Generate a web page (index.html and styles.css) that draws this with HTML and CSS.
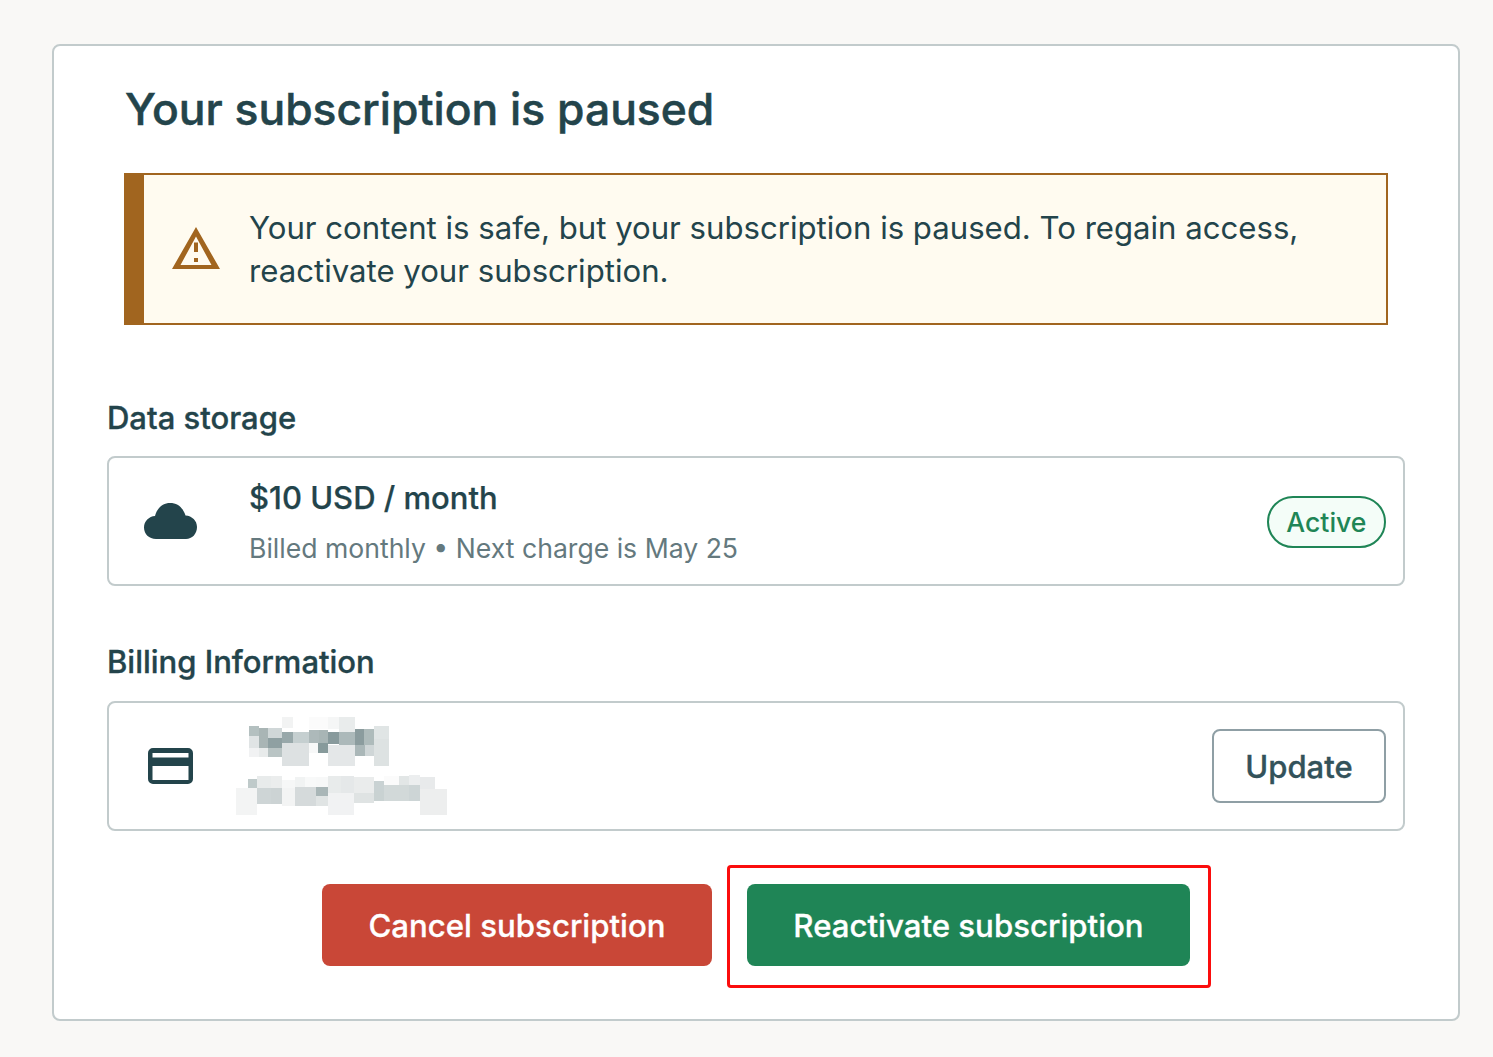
FILE: index.html
```html
<!DOCTYPE html>
<html lang="en">
<head>
<meta charset="utf-8">
<title>Subscription</title>
<link rel="stylesheet" href="styles.css">
</head>
<body>
<main class="card">
  <h1 class="title">Your subscription is paused</h1>
  <div class="alert">
    <svg class="alert-icon" viewBox="0 0 48 44" aria-hidden="true">
      <path fill-rule="evenodd" d="M24 0 48 42H0ZM24 9.500 8.500 38H39.500Z" fill="#a1651f"/>
      <rect x="22" y="15.500" width="4" height="9.500" fill="#a1651f"/>
      <rect x="22" y="31" width="4" height="4" fill="#a1651f"/>
    </svg>
    <p class="alert-text">Your content is safe, but your subscription is paused. To regain access, reactivate your subscription.</p>
  </div>

  <h2 class="label label-storage">Data storage</h2>
  <section class="row">
    <svg class="row-icon cloud" viewBox="0 0 53 36" aria-hidden="true">
      <path fill="#23444b" d="M12 36C5 36 0 31 0 24.500C0 18 5 13.500 11 13C13 5 19 0 26 0C34 0 39 5 41.500 12.500C48 13 53 17.500 53 24C53 31 48 36 42 36Z"/>
    </svg>
    <div class="row-body">
      <div class="plan">$10 USD / month</div>
      <div class="meta">Billed monthly • Next charge is May 25</div>
    </div>
    <span class="badge">Active</span>
  </section>

  <h2 class="label label-billing">Billing Information</h2>
  <section class="row">
    <svg class="row-icon credit" viewBox="0 0 45 36" aria-hidden="true">
      <path fill-rule="evenodd" fill="#23444b" d="M5 0H40A5 5 0 0 1 45 5V31A5 5 0 0 1 40 36H5A5 5 0 0 1 0 31V5A5 5 0 0 1 5 0ZM4.500 5V9.500H40.500V5ZM4.500 18V32H40.500V18Z"/>
    </svg>
    <svg class="mosaic" viewBox="408 69 633 294" aria-hidden="true">
      <rect x="546" y="69" width="33" height="33" fill="#f2f3f3"/>
      <rect x="627" y="69" width="57" height="36" fill="#fbfbfb"/>
      <rect x="684" y="69" width="33" height="36" fill="#f5f6f6"/>
      <rect x="717" y="69" width="48" height="45" fill="#e9ecec"/>
      <rect x="447" y="96" width="30" height="30" fill="#b4c0c0"/>
      <rect x="477" y="102" width="27" height="60" fill="#a9b5b5"/>
      <rect x="504" y="102" width="42" height="30" fill="#d0d7d8"/>
      <rect x="546" y="114" width="33" height="33" fill="#98a8aa"/>
      <rect x="579" y="114" width="48" height="33" fill="#c5cfd0"/>
      <rect x="627" y="108" width="30" height="39" fill="#adb9ba"/>
      <rect x="657" y="108" width="27" height="39" fill="#a8b5b5"/>
      <rect x="684" y="114" width="33" height="36" fill="#889a9c"/>
      <rect x="717" y="114" width="48" height="39" fill="#acb9ba"/>
      <rect x="765" y="105" width="27" height="48" fill="#8b9c9e"/>
      <rect x="792" y="105" width="30" height="48" fill="#aebbbb"/>
      <rect x="822" y="96" width="45" height="39" fill="#e0e5e5"/>
      <rect x="447" y="126" width="30" height="36" fill="#e0e4e5"/>
      <rect x="504" y="132" width="42" height="30" fill="#8fa0a2"/>
      <rect x="447" y="162" width="30" height="27" fill="#f1f2f3"/>
      <rect x="477" y="162" width="27" height="27" fill="#e8ebeb"/>
      <rect x="504" y="162" width="42" height="27" fill="#b9c4c4"/>
      <rect x="546" y="147" width="81" height="69" fill="#dde1e2"/>
      <rect x="627" y="147" width="27" height="30" fill="#f7f8f8"/>
      <rect x="654" y="147" width="30" height="30" fill="#879a9b"/>
      <rect x="684" y="153" width="81" height="63" fill="#e4e7e8"/>
      <rect x="765" y="153" width="30" height="33" fill="#aab7b8"/>
      <rect x="795" y="153" width="27" height="33" fill="#cfd6d7"/>
      <rect x="822" y="135" width="45" height="81" fill="#dde2e2"/>
      <rect x="444" y="255" width="27" height="27" fill="#bfcaca"/>
      <rect x="471" y="246" width="42" height="36" fill="#e8ebeb"/>
      <rect x="513" y="246" width="33" height="36" fill="#ebeded"/>
      <rect x="546" y="258" width="39" height="24" fill="#f6f7f7"/>
      <rect x="585" y="249" width="30" height="30" fill="#f1f3f3"/>
      <rect x="615" y="249" width="33" height="30" fill="#f8f9f9"/>
      <rect x="648" y="249" width="36" height="30" fill="#f7f8f8"/>
      <rect x="684" y="246" width="39" height="51" fill="#e8ebeb"/>
      <rect x="723" y="246" width="39" height="51" fill="#e5e8e9"/>
      <rect x="762" y="249" width="60" height="48" fill="#eaecec"/>
      <rect x="822" y="261" width="30" height="30" fill="#c9d2d3"/>
      <rect x="852" y="246" width="45" height="27" fill="#fbfbfb"/>
      <rect x="897" y="246" width="30" height="27" fill="#e2e6e6"/>
      <rect x="927" y="243" width="33" height="30" fill="#eceeef"/>
      <rect x="960" y="249" width="45" height="36" fill="#e8eaeb"/>
      <rect x="408" y="282" width="63" height="81" fill="#f3f4f4"/>
      <rect x="471" y="282" width="42" height="48" fill="#ced5d6"/>
      <rect x="513" y="282" width="33" height="48" fill="#ccd3d4"/>
      <rect x="546" y="282" width="39" height="54" fill="#f3f4f4"/>
      <rect x="585" y="279" width="63" height="57" fill="#d5dadb"/>
      <rect x="648" y="279" width="36" height="27" fill="#a9b6b7"/>
      <rect x="648" y="306" width="36" height="30" fill="#e0e4e4"/>
      <rect x="684" y="297" width="78" height="66" fill="#f1f2f3"/>
      <rect x="762" y="297" width="60" height="30" fill="#dfe3e3"/>
      <rect x="822" y="291" width="30" height="30" fill="#c9d2d2"/>
      <rect x="852" y="273" width="75" height="48" fill="#d2d9d9"/>
      <rect x="927" y="273" width="33" height="48" fill="#cdd5d6"/>
      <rect x="960" y="285" width="81" height="78" fill="#edeeee"/>
    </svg>
    <button class="update" type="button">Update</button>
  </section>

  <div class="actions">
    <button class="action cancel" type="button">Cancel subscription</button>
    <button class="action reactivate" type="button">Reactivate subscription<span class="highlight"></span></button>
  </div>
</main>
</body>
</html>
```
FILE: styles.css
```css
* { box-sizing: border-box; }
html, body { margin: 0; }
body {
  background: #f9f8f6;
  padding: 44px 33px 36px 52px;
  font-family: Inter, "Liberation Sans", sans-serif;
  color: #23444b;
}
.card {
  width: 1408px;
  height: 977px;
  background: #fff;
  border: 2px solid #c2cbcc;
  border-radius: 8px;
  padding: 0 53px;
}
.title {
  margin: 0 0 0 18px;
  padding-top: 32px;
  font-size: 44.4px;
  line-height: 62px;
  font-weight: 500;
  letter-spacing: 0;
  -webkit-text-stroke: 0.5px #23444b;
}
.alert {
  display: flex;
  align-items: center;
  height: 152px;
  margin: 33px 17px 0;
  background: #fffbf0;
  border: 2px solid #a1651f;
  border-left-width: 20px;
}
.alert-icon { width: 48px; height: 44px; margin-left: 28px; flex: none; }
.alert-text {
  margin: 2px 0 0 29px;
  width: 1080px;
  font-size: 31.15px;
  line-height: 43px;
}
.label {
  margin: 0;
  font-size: 31px;
  line-height: 40px;
  font-weight: 500;
  -webkit-text-stroke: 0.35px #23444b;
}
.label-storage { margin-top: 73px; margin-bottom: 18px; }
.label-billing { margin-top: 56px; margin-bottom: 19px; }
.row {
  display: flex;
  align-items: center;
  height: 130px;
  border: 2px solid #c2cbcc;
  border-radius: 8px;
  padding: 0 17px 0 35px;
}
.row-icon { flex: none; }
.cloud { width: 53px; height: 36px; margin-right: 52px; }
.credit { width: 45px; height: 36px; margin: 0 0 0 4px; }
.row-body { flex: 1; padding-top: 1px; }
.plan {
  font-size: 31px;
  line-height: 44px;
  font-weight: 500;
  margin-bottom: 8px;
  -webkit-text-stroke: 0.25px #23444b;
}
.meta { font-size: 26.6px; line-height: 40px; color: #64797e; }
.badge {
  display: flex;
  align-items: center;
  height: 52px;
  margin-top: 2px;
  padding: 0 17.5px;
  background: #f4fdf8;
  border: 2px solid #1f8556;
  border-radius: 26px;
  color: #1f8556;
  font-size: 26.6px;
  font-weight: 500;
}
.mosaic { width: 211px; height: 98px; margin-left: 43px; margin-right: auto; flex: none; }
.update {
  width: 174px;
  height: 74px;
  background: #fff;
  border: 2px solid #8f9fa5;
  border-radius: 8px;
  color: #33525a;
  font: 500 31px Inter, "Liberation Sans", sans-serif;
  -webkit-text-stroke: 0.35px #33525a;
}
.actions {
  display: flex;
  justify-content: center;
  gap: 35px;
  margin-top: 53px;
}
.action {
  position: relative;
  height: 82px;
  padding: 2px 0 0;
  border: 0;
  border-radius: 8px;
  color: #fff;
  font: 500 31.2px Inter, "Liberation Sans", sans-serif;
  -webkit-text-stroke: 0.3px #fff;
}
.cancel { width: 390px; background: #c94737; }
.reactivate { width: 443px; background: #1f8556; }
.highlight {
  position: absolute;
  inset: -19px -21px -22px -20px;
  border: 3px solid #fb0d0d;
  border-radius: 4px;
}
```
